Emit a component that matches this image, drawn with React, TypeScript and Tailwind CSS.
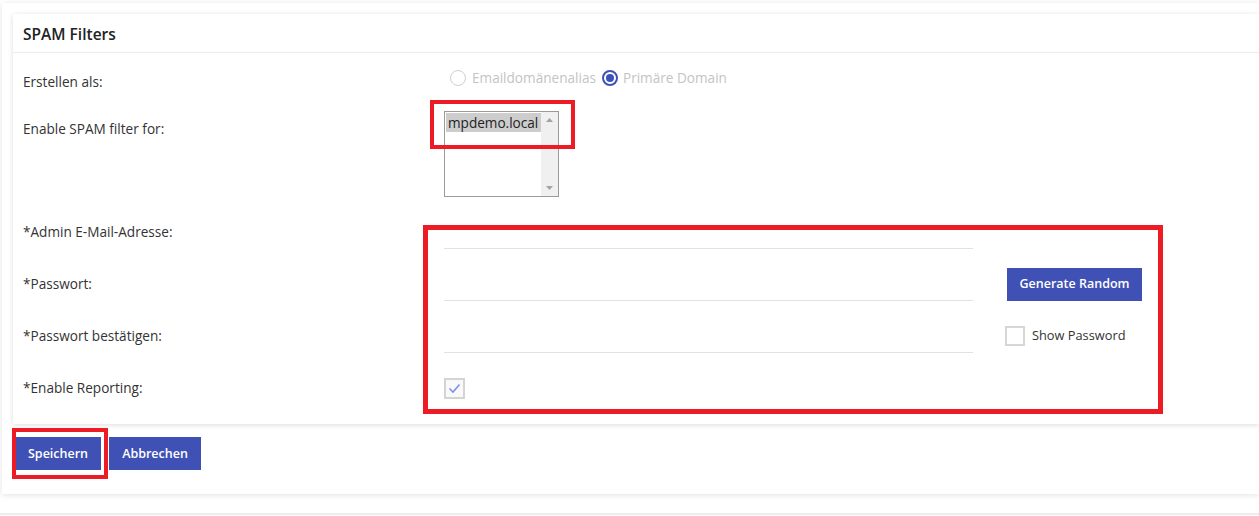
import React from 'react';

const font = { fontFamily: '"Open Sans", "Noto Sans", sans-serif' };

function FieldRow({ label, children, extra }: { label: string; children: React.ReactNode; extra?: React.ReactNode }) {
  return (
    <div className="flex items-center h-[52px]">
      <div className="w-[421px] pt-[1px] text-[13.6px] text-[#333]">{label}</div>
      <div className="w-[529px] flex items-center">{children}</div>
      <div className="ml-[34px] flex items-center">{extra}</div>
    </div>
  );
}

function LineInput() {
  return <div className="w-full h-[34px] border-b border-[#e2e2e2]"></div>;
}

export default function App() {
  return (
    <div style={font} className="relative w-[1259px] h-[516px] bg-white overflow-hidden">
      {/* Outer panel */}
      <div className="ml-[2px] mt-[3px] bg-white shadow-[0_1px_6px_rgba(0,0,0,0.12)] pt-[11px] pb-[24px] pl-[11px]">
        {/* Card */}
        <div className="bg-white shadow-[0_1px_5px_rgba(0,0,0,0.14)]">
          <div className="h-[39px] flex items-center pt-[3px] px-[10px] border-b border-[#ececec]">
            <h2 className="text-[15.5px] font-semibold text-[#222]">SPAM Filters</h2>
          </div>

          <div className="pl-[10px] pb-[10px]">
            {/* Erstellen als */}
            <div className="flex h-[48px]">
              <div className="w-[421px] pt-[20px] text-[13.6px] leading-[18px] text-[#333]">Erstellen als:</div>
              <div className="pt-[16px] flex items-center h-[34px] gap-[6px] text-[13.6px] text-[#c4c4c4]">
                <span className="ml-[6px] w-[16px] h-[16px] rounded-full border-[1.5px] border-[#d0d0d0] bg-white"></span>
                <span>Emaildomänenalias</span>
                <span className="w-[16px] h-[16px] rounded-full border-2 border-[#3f51b5] flex items-center justify-center">
                  <span className="w-[8px] h-[8px] rounded-full bg-[#3f51b5]"></span>
                </span>
                <span className="-ml-[1px]">Primäre Domain</span>
              </div>
            </div>

            {/* Enable SPAM filter for */}
            <div className="flex h-[105px]">
              <div className="w-[421px] pt-[19px] text-[13.6px] leading-[18px] text-[#333]">Enable SPAM filter for:</div>
              <div className="pt-[10px]">
                <div className="w-[115px] h-[86px] border border-[#9a9a9a] bg-white flex">
                  <div className="flex-1 pt-[1px] pl-[1px]">
                    <div className="bg-[#cdcdcd] text-[13.6px] leading-[19px] text-[#222] pl-[2px] whitespace-nowrap overflow-hidden">mpdemo.local</div>
                  </div>
                  <div className="w-[17px] bg-[#f0f0f0] flex flex-col justify-between items-center py-[6px]">
                    <svg width="7" height="4" viewBox="0 0 7 4"><path d="M0 4 L3.5 0 L7 4 Z" fill="#a3a3a3" /></svg>
                    <svg width="7" height="4" viewBox="0 0 7 4"><path d="M0 0 L3.5 4 L7 0 Z" fill="#a3a3a3" /></svg>
                  </div>
                </div>
              </div>
            </div>

            <FieldRow label="*Admin E-Mail-Adresse:">
              <LineInput />
            </FieldRow>
            <FieldRow
              label="*Passwort:"
              extra={
                <button className="h-[33px] w-[135px] bg-[#3f51b5] text-white text-[12.5px] font-semibold">Generate Random</button>
              }
            >
              <LineInput />
            </FieldRow>
            <FieldRow
              label="*Passwort bestätigen:"
              extra={
                <label className="-ml-[2px] flex items-center gap-[7px] text-[12.8px] text-[#333]">
                  <span className="w-[20px] h-[20px] border-2 border-[#d6d6d6] bg-white"></span>
                  Show Password
                </label>
              }
            >
              <LineInput />
            </FieldRow>
            <FieldRow label="*Enable Reporting:">
              <span className="w-[21px] h-[21px] border-2 border-[#d4d4d4] bg-[#f9f9f9] flex items-center justify-center">
                <svg width="13" height="11" viewBox="0 0 13 11">
                  <path d="M1.5 5.5 L5 9 L11.5 1.5" fill="none" stroke="#7f8ef0" strokeWidth="1.6" />
                </svg>
              </span>
            </FieldRow>
          </div>
        </div>

        <div className="mt-[13px] ml-[2px] flex gap-[8px]">
          <button className="h-[33px] w-[86px] pt-[1px] bg-[#3f51b5] text-white text-[12.5px] font-semibold">Speichern</button>
          <button className="h-[33px] w-[92px] pt-[1px] bg-[#3f51b5] text-white text-[12.5px] font-semibold">Abbrechen</button>
        </div>
      </div>

      <div className="mt-[19px] h-[2px] bg-[#ececec]"></div>

      {/* Annotation boxes */}
      <div className="absolute left-[430px] top-[100px] w-[145px] h-[49px] border-4 border-[#ed1c24]"></div>
      <div className="absolute left-[423px] top-[225px] w-[740px] h-[189px] border-[5px] border-[#ed1c24]"></div>
      <div className="absolute left-[12px] top-[428px] w-[96px] h-[51px] border-4 border-[#ed1c24]"></div>
    </div>
  );
}
